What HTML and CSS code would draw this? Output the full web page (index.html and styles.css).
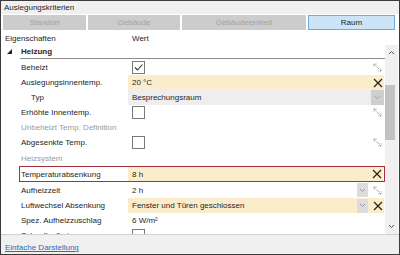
FILE: index.html
```html
<!DOCTYPE html>
<html lang="de">

<head>
  <meta charset="UTF-8" />
  <title>Auslegungskriterien</title>
  <link rel="stylesheet" href="styles.css">
</head>

<body>
  <div class="frame">
    <div class="title">Auslegungskriterien</div>

    <!-- Ebenen -->
    <div class="tabs">
      <div class="tab">Standort</div>
      <div class="tab">Gebäude</div>
      <div class="tab">Gebäudeeinheit</div>
      <div class="tab active">Raum</div>
    </div>

    <div class="grid-head">
      <span class="col-name">Eigenschaften</span>
      <span class="col-value">Wert</span>
    </div>

    <div class="grid-body">
      <div class="list">
        <div class="group">
          <svg class="expander" width="5" height="5" viewBox="0 0 5 5"><polygon points="5,0 5,5 0,5" fill="#222" /></svg>
          <span>Heizung</span>
        </div>
        <div class="group-rule"></div>

        <div class="row h16">
          <div class="label">Beheizt</div>
          <div class="value">
            <span class="check"><svg width="11" height="11" viewBox="0 0 11 11"><path d="M2 5.5 L4.5 8 L9.5 2.5" fill="none" stroke="#333" stroke-width="1.1" /></svg></span>
            <span class="tools"><svg class="reset" width="9" height="9" viewBox="0 0 9 9"><path d="M1 1 L8 8 M1 1 L1 3.5 M1 1 L3.5 1 M8 8 L8 5.5 M8 8 L5.5 8" stroke="#8a8a8a" stroke-width="1" stroke-dasharray="1.2 0.8" fill="none" /></svg></span>
          </div>
        </div>

        <div class="row">
          <div class="label">Auslegungsinnentemp.</div>
          <div class="value changed">
            <span class="text">20 °C</span>
            <span class="tools"><svg width="10" height="10" viewBox="0 0 10 10"><path d="M1 1 L9 9 M9 1 L1 9" stroke="#222" stroke-width="1.2" /></svg></span>
          </div>
        </div>

        <div class="row">
          <div class="label sub">Typ</div>
          <div class="value locked">
            <span class="text">Besprechungsraum</span>
            <span class="tools drop-gray"><svg width="7" height="5" viewBox="0 0 7 5"><path d="M1 1 L3.5 3.5 L6 1" stroke="#aaa" fill="none" /></svg></span>
          </div>
        </div>

        <div class="row">
          <div class="label">Erhöhte Innentemp.</div>
          <div class="value">
            <span class="check"></span>
            <span class="tools"><svg width="9" height="9" viewBox="0 0 9 9"><path d="M1 1 L8 8 M1 1 L1 3.5 M1 1 L3.5 1 M8 8 L8 5.5 M8 8 L5.5 8" stroke="#8a8a8a" stroke-width="1" stroke-dasharray="1.2 0.8" fill="none" /></svg></span>
          </div>
        </div>

        <div class="row">
          <div class="label muted">Unbeheizt Temp. Definition</div>
          <div class="value"></div>
        </div>

        <div class="row">
          <div class="label">Abgesenkte Temp.</div>
          <div class="value">
            <span class="check"></span>
            <span class="tools"><svg width="9" height="9" viewBox="0 0 9 9"><path d="M1 1 L8 8 M1 1 L1 3.5 M1 1 L3.5 1 M8 8 L8 5.5 M8 8 L5.5 8" stroke="#8a8a8a" stroke-width="1" stroke-dasharray="1.2 0.8" fill="none" /></svg></span>
          </div>
        </div>

        <div class="row h16">
          <div class="label muted">Heizsystem</div>
          <div class="value"></div>
        </div>

        <div class="row h16 selected">
          <div class="label">Temperaturabsenkung</div>
          <div class="value changed">
            <span class="text">8 h</span>
            <span class="tools"><svg width="10" height="10" viewBox="0 0 10 10"><path d="M1 1 L9 9 M9 1 L1 9" stroke="#222" stroke-width="1.2" /></svg></span>
          </div>
        </div>

        <div class="row h16">
          <div class="label">Aufheizzeit</div>
          <div class="value">
            <span class="text">2 h</span>
            <span class="drop"><svg width="7" height="5" viewBox="0 0 7 5"><path d="M1 1 L3.5 3.5 L6 1" stroke="#999" fill="none" /></svg></span>
            <span class="tools"><svg width="9" height="9" viewBox="0 0 9 9"><path d="M1 1 L8 8 M1 1 L1 3.5 M1 1 L3.5 1 M8 8 L8 5.5 M8 8 L5.5 8" stroke="#8a8a8a" stroke-width="1" stroke-dasharray="1.2 0.8" fill="none" /></svg></span>
          </div>
        </div>

        <div class="row">
          <div class="label">Luftwechsel Absenkung</div>
          <div class="value changed">
            <span class="text">Fenster und Türen geschlossen</span>
            <span class="drop"><svg width="7" height="5" viewBox="0 0 7 5"><path d="M1 1 L3.5 3.5 L6 1" stroke="#999" fill="none" /></svg></span>
            <span class="tools"><svg width="10" height="10" viewBox="0 0 10 10"><path d="M1 1 L9 9 M9 1 L1 9" stroke="#222" stroke-width="1.2" /></svg></span>
          </div>
        </div>

        <div class="row">
          <div class="label">Spez. Aufheizzuschlag</div>
          <div class="value">
            <span class="text">6 W/m²</span>
          </div>
        </div>

        <div class="row">
          <div class="label">Schnellaufheizung</div>
          <div class="value">
            <span class="check"></span>
          </div>
        </div>
      </div>

      <!-- Scrollbar -->
      <div class="scrollbar">
        <svg class="arrow" width="7" height="5" viewBox="0 0 7 5"><path d="M1 4 L3.5 1.5 L6 4" stroke="#555" fill="none" /></svg>
        <div class="track">
          <div class="thumb"></div>
        </div>
        <svg class="arrow" width="7" height="5" viewBox="0 0 7 5"><path d="M1 1 L3.5 3.5 L6 1" stroke="#555" fill="none" /></svg>
      </div>
    </div>

    <div class="footer">
      <a href="#" class="link">Einfache Darstellung</a>
    </div>
  </div>
</body>

</html>
```

FILE: styles.css
```css
body {
  margin: 0;
  font-family: "Liberation Sans", Arial, sans-serif;
  font-size: 8px;
  color: #1e1e1e;
  overflow: hidden;
}

.frame {
  width: 400px;
  height: 255px;
  box-sizing: border-box;
  border: 1px solid #3c3c3c;
  background-color: #ffffff;
  display: flex;
  flex-direction: column;
}

.title {
  height: 13px;
  line-height: 13px;
  padding-left: 3px;
  background-color: #f0f0f0;
}

.tabs {
  height: 17px;
  box-sizing: border-box;
  padding: 1px 0 1px 2px;
  display: grid;
  grid-template-columns: 83px 92px 124px 87px;
  gap: 2px;
}

.tab {
  background-color: #cccccc;
  color: #a2a2a2;
  display: flex;
  align-items: center;
  justify-content: center;
}

.tab.active {
  background-color: #cce4f7;
  border: 1px solid #74a9d8;
  color: #1e1e1e;
}

.grid-head {
  height: 14px;
  display: flex;
  align-items: center;
}

.col-name {
  width: 127px;
  padding-left: 4px;
}

.grid-body {
  height: 189px;
  display: flex;
}

.list {
  width: 384px;
  overflow: hidden;
}

.group {
  height: 13px;
  display: flex;
  align-items: center;
  font-weight: bold;
}

.expander {
  margin: 0 9px 0 6px;
}

.group-rule {
  margin-left: 19px;
  border-top: 1px solid #8c8c8c;
}

.row {
  height: 15px;
  margin-left: 18px;
  display: grid;
  grid-template-columns: 109px 256px;
}

.row.h16 {
  height: 16px;
}

.row.selected {
  outline: 1px solid #a3303c;
  outline-offset: -1px;
}

.label {
  padding-left: 2px;
  display: flex;
  align-items: center;
  white-space: nowrap;
}

.label.sub {
  padding-left: 12px;
}

.label.muted {
  color: #9a9a9a;
}

.value {
  display: flex;
  align-items: center;
  padding-left: 4px;
}

.value.changed {
  background-color: #fbedcc;
}

.row.selected .value.changed {
  margin: 1px 1px 1px 0;
}

.value.locked {
  background-color: #eeeeee;
}

.text {
  flex-grow: 1;
  white-space: nowrap;
}

.check {
  width: 11px;
  height: 11px;
  border: 1px solid #7a7a7a;
  background-color: #ffffff;
  display: flex;
  align-items: center;
  justify-content: center;
  margin-right: auto;
}

.drop {
  width: 11px;
  height: 14px;
  background-color: #dcdcdc;
  display: flex;
  align-items: center;
  justify-content: center;
  margin-right: 3px;
}

.tools {
  width: 13px;
  height: 100%;
  margin-left: auto;
  display: flex;
  align-items: center;
  justify-content: center;
}

.tools.drop-gray {
  background-color: #cfcfcf;
}

.scrollbar {
  width: 13px;
  background-color: #f0f0f0;
  display: flex;
  flex-direction: column;
  align-items: center;
}

.arrow {
  margin: 5px 0;
}

.track {
  flex-grow: 1;
  width: 100%;
  padding-top: 25px;
}

.thumb {
  width: 10px;
  height: 55px;
  background-color: #c2c2c2;
}

.footer {
  flex-grow: 1;
  background-color: #f0f0f0;
  border-top: 1px solid #cfcfcf;
  display: flex;
  align-items: flex-end;
  padding: 0 0 2px 4px;
}

.link {
  color: #2d6bb5;
  text-decoration: underline;
}
```
